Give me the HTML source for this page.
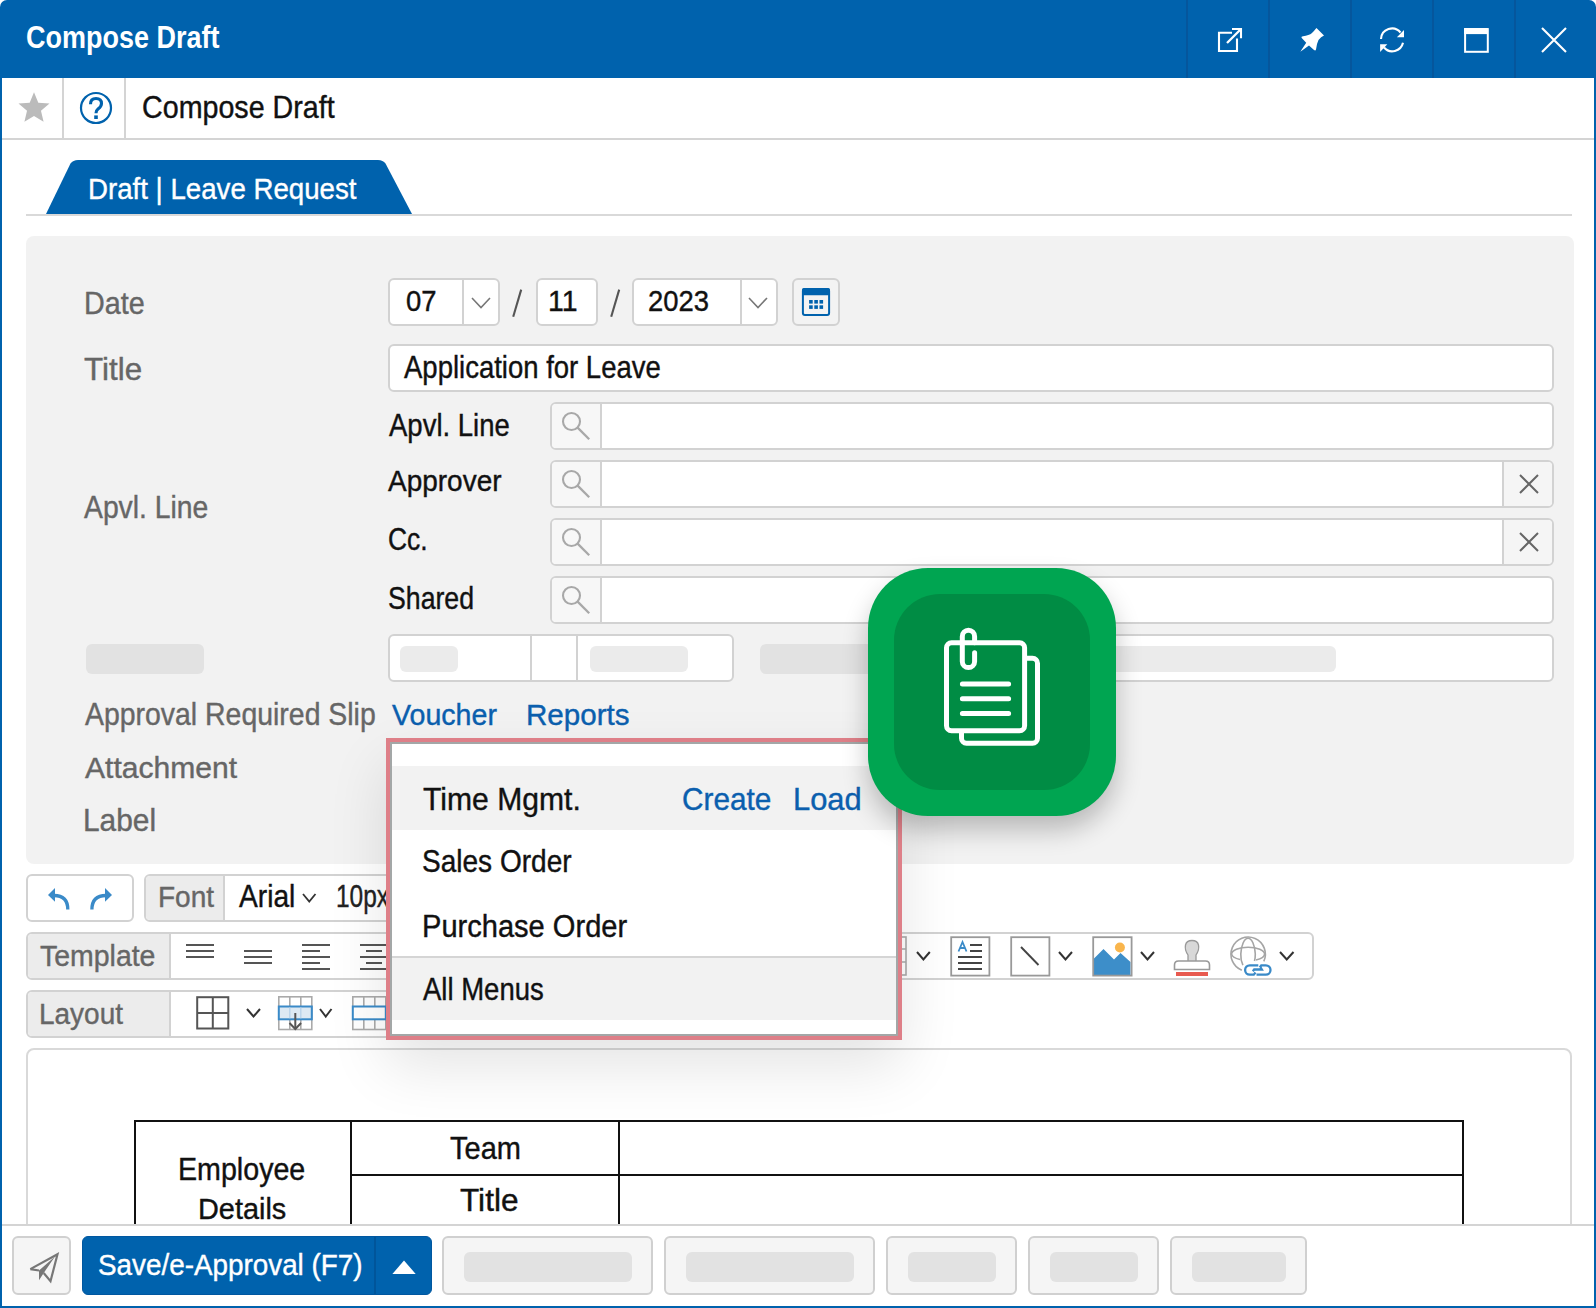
<!DOCTYPE html><html><head><meta charset="utf-8"><style>
html,body{margin:0;padding:0;}
body{width:1596px;height:1308px;overflow:hidden;position:relative;background:#fff;font-family:"Liberation Sans",sans-serif;}
.a{position:absolute;box-sizing:content-box;}
.t{position:absolute;white-space:nowrap;line-height:1;transform-origin:0 0;-webkit-text-stroke:0.4px currentColor;}
svg.a{overflow:visible;}
</style></head><body>
<div class="a" style="left:0px;top:0px;width:1596px;height:1308px;background:#0062ad;border-radius:7px 7px 0 0;"></div>
<div class="a" style="left:2px;top:78px;width:1592px;height:1228px;background:#fff;"></div>
<div class="t" style="left:25.92px;top:22.16px;font-size:30.52px;color:#fff;font-weight:700;-webkit-text-stroke:0;transform:scaleX(0.8841);">Compose Draft</div>
<div class="a" style="left:1186px;top:0px;width:2px;height:78px;background:#05569c;"></div>
<div class="a" style="left:1268px;top:0px;width:2px;height:78px;background:#05569c;"></div>
<div class="a" style="left:1350px;top:0px;width:2px;height:78px;background:#05569c;"></div>
<div class="a" style="left:1432px;top:0px;width:2px;height:78px;background:#05569c;"></div>
<div class="a" style="left:1514px;top:0px;width:2px;height:78px;background:#05569c;"></div>
<svg class="a" style="left:1210px;top:20px;" width="40" height="40" viewBox="0 0 40 40"><path d="M22 12.8 H9 V31 H27 V18.5" fill="none" stroke="#fff" stroke-width="2.1"/><path d="M17 23 L30.5 9.5" stroke="#fff" stroke-width="2.3"/><path d="M22 9 H31 V18.3" fill="none" stroke="#fff" stroke-width="2.1"/></svg>
<svg class="a" style="left:1292px;top:20px;" width="40" height="40" viewBox="0 0 40 40"><path d="M24.5 8.1 L32 15.6 Q29 17 26.5 20 Q24.5 24 24 29.5 Q23.5 31 22 30 L17 25.4 L8.3 31.7 L14.2 22.8 L9.5 17.8 Q9 16.5 11 16.2 Q17 15.5 20 13 Q22.5 10.5 24 8.5 Z" fill="#fff"/></svg>
<svg class="a" style="left:1372px;top:20px;" width="40" height="40" viewBox="0 0 40 40"><path d="M9 19 A11 11 0 0 1 28.5 12.5" fill="none" stroke="#fff" stroke-width="2.1"/><path d="M32 9.9 V17.3 H24.9 Z" fill="#fff"/><path d="M31 22.8 A11 11 0 0 1 12 27.5" fill="none" stroke="#fff" stroke-width="2.1"/><path d="M8.1 24.2 H15.3 L8.1 32 Z" fill="#fff"/></svg>
<svg class="a" style="left:1460px;top:24px;" width="32" height="32" viewBox="0 0 32 32"><rect x="5.1" y="5.1" width="22.7" height="22.7" fill="none" stroke="#fff" stroke-width="2"/><rect x="4.1" y="4.1" width="23.7" height="6" fill="#fff"/></svg>
<svg class="a" style="left:1536px;top:22px;" width="36" height="36" viewBox="0 0 36 36"><path d="M6 6 L30 30 M30 6 L6 30" stroke="#fff" stroke-width="2.1"/></svg>
<div class="a" style="left:2px;top:138px;width:1592px;height:2px;background:#d4d4d4;"></div>
<div class="a" style="left:62px;top:78px;width:2px;height:60px;background:#d4d4d4;"></div>
<div class="a" style="left:124px;top:78px;width:2px;height:60px;background:#d4d4d4;"></div>
<svg class="a" style="left:14px;top:88px;" width="40" height="40" viewBox="0 0 40 40"><path d="M20.00 4.30 L24.31 14.67 L35.50 15.56 L26.98 22.87 L29.58 33.79 L20.00 27.94 L10.42 33.79 L13.02 22.87 L4.50 15.56 L15.69 14.67 Z" fill="#bbbbbb"/></svg>
<svg class="a" style="left:76px;top:88px;" width="40" height="40" viewBox="0 0 40 40"><circle cx="20" cy="20" r="15" fill="none" stroke="#0062ad" stroke-width="2.2"/><path d="M14.5 16.2 Q14.5 10.5 20 10.5 Q25.5 10.5 25.5 15.5 Q25.5 18.5 22 21 Q20 22.5 20 25.3" fill="none" stroke="#0062ad" stroke-width="3.1"/><rect x="18.2" y="27.4" width="3.6" height="3.6" fill="#0062ad"/></svg>
<div class="t" style="left:141.57px;top:92.16px;font-size:30.52px;color:#111;transform:scaleX(0.9389);">Compose Draft</div>
<svg class="a" style="left:40px;top:155px;" width="380" height="65" viewBox="0 0 380 65"><path d="M6 59 L30.5 8.5 Q33 5 38 5 H338 Q343 5 345.5 8.5 L372 59 Z" fill="#0062ad"/></svg>
<div class="a" style="left:26px;top:214px;width:1546px;height:2px;background:#d9d9d9;"></div>
<div class="t" style="left:87.79px;top:175.39px;font-size:29.07px;color:#fff;transform:scaleX(0.9512);">Draft | Leave Request</div>
<div class="a" style="left:26px;top:236px;width:1548px;height:628px;background:#f2f2f2;border-radius:8px;"></div>
<div class="t" style="left:83.70px;top:288.16px;font-size:30.52px;color:#666666;transform:scaleX(0.9408);">Date</div>
<div class="t" style="left:84.37px;top:354.16px;font-size:30.52px;color:#666666;transform:scaleX(1.0278);">Title</div>
<div class="t" style="left:84.00px;top:492.16px;font-size:30.52px;color:#666666;transform:scaleX(0.9274);">Apvl. Line</div>
<div class="t" style="left:84.50px;top:699.05px;font-size:31.25px;color:#666666;transform:scaleX(0.9096);">Approval Required Slip</div>
<div class="t" style="left:84.50px;top:752.65px;font-size:29.94px;color:#666666;transform:scaleX(1.0046);">Attachment</div>
<div class="t" style="left:82.61px;top:805.79px;font-size:30.96px;color:#666666;transform:scaleX(0.9648);">Label</div>
<div class="a" style="left:86px;top:644px;width:118px;height:30px;background:#e2e2e2;border-radius:6px;"></div>
<div class="a" style="left:388px;top:278px;width:108px;height:44px;border:2px solid #d2d2d2;border-radius:6px;background:#fff;"></div>
<div class="a" style="left:462px;top:280px;width:2px;height:44px;background:#d2d2d2;"></div>
<svg class="a" style="left:470.0px;top:295.95px;" width="22" height="13.5" viewBox="0 0 22 13.5"><path d="M2 2 L11.0 11.5 L20 2" fill="none" stroke="#777" stroke-width="1.6"/></svg>
<div class="t" style="left:405.90px;top:287.39px;font-size:29.07px;color:#111;transform:scaleX(0.9443);">07</div>
<svg class="a" style="left:500px;top:280px;" width="40" height="40" viewBox="0 0 40 40"><path d="M13.2 36.8 L21.2 9.6" stroke="#555" stroke-width="2.1"/></svg>
<div class="a" style="left:536px;top:278px;width:58px;height:44px;border:2px solid #d2d2d2;border-radius:6px;background:#fff;"></div>
<div class="t" style="left:547.87px;top:287.39px;font-size:29.07px;color:#111;transform:scaleX(0.9775);">11</div>
<svg class="a" style="left:598px;top:280px;" width="40" height="40" viewBox="0 0 40 40"><path d="M13.2 36.8 L21.2 9.6" stroke="#555" stroke-width="2.1"/></svg>
<div class="a" style="left:632px;top:278px;width:142px;height:44px;border:2px solid #d2d2d2;border-radius:6px;background:#fff;"></div>
<div class="a" style="left:740px;top:280px;width:2px;height:44px;background:#d2d2d2;"></div>
<svg class="a" style="left:747.0px;top:295.95px;" width="22" height="13.5" viewBox="0 0 22 13.5"><path d="M2 2 L11.0 11.5 L20 2" fill="none" stroke="#777" stroke-width="1.6"/></svg>
<div class="t" style="left:647.63px;top:287.39px;font-size:29.07px;color:#111;transform:scaleX(0.9426);">2023</div>
<div class="a" style="left:792px;top:278px;width:44px;height:44px;border:2px solid #d2d2d2;border-radius:6px;background:#f3f3f3;"></div>
<svg class="a" style="left:800px;top:286px;" width="32" height="32" viewBox="0 0 32 32"><rect x="2.9" y="2.9" width="26.2" height="26.2" rx="2" fill="none" stroke="#0062ad" stroke-width="2"/><rect x="2" y="2" width="28" height="7.2" rx="2" fill="#0062ad"/><g fill="#0062ad"><rect x="9.1" y="14" width="3.6" height="3.6"/><rect x="14.3" y="14" width="3.6" height="3.6"/><rect x="19.5" y="14" width="3.6" height="3.6"/><rect x="9.1" y="19.3" width="3.6" height="3.6"/><rect x="14.3" y="19.3" width="3.6" height="3.6"/><rect x="19.5" y="19.3" width="3.6" height="3.6"/></g></svg>
<div class="a" style="left:388px;top:344px;width:1162px;height:44px;border:2px solid #d2d2d2;border-radius:6px;background:#fff;"></div>
<div class="t" style="left:404.40px;top:352.16px;font-size:30.52px;color:#111;transform:scaleX(0.9009);">Application for Leave</div>
<div class="t" style="left:388.50px;top:410.05px;font-size:31.25px;color:#111;transform:scaleX(0.8801);">Apvl. Line</div>
<div class="a" style="left:550px;top:402px;width:1000px;height:44px;border:2px solid #d2d2d2;border-radius:6px;background:#fff;"></div>
<div class="a" style="left:552px;top:404px;width:48px;height:44px;background:#f7f7f7;border-radius:4px 0 0 4px;"></div>
<div class="a" style="left:600px;top:404px;width:2px;height:44px;background:#d2d2d2;"></div>
<svg class="a" style="left:558px;top:410px;" width="36" height="36" viewBox="0 0 36 36"><circle cx="13.5" cy="11.5" r="8.5" fill="none" stroke="#a8a8a8" stroke-width="2.1"/><path d="M19.6 17.6 L31.2 29.2" stroke="#a8a8a8" stroke-width="2.3"/></svg>
<div class="t" style="left:388.40px;top:466.41px;font-size:30.23px;color:#111;transform:scaleX(0.9260);">Approver</div>
<div class="a" style="left:550px;top:460px;width:1000px;height:44px;border:2px solid #d2d2d2;border-radius:6px;background:#fff;"></div>
<div class="a" style="left:552px;top:462px;width:48px;height:44px;background:#f7f7f7;border-radius:4px 0 0 4px;"></div>
<div class="a" style="left:600px;top:462px;width:2px;height:44px;background:#d2d2d2;"></div>
<svg class="a" style="left:558px;top:468px;" width="36" height="36" viewBox="0 0 36 36"><circle cx="13.5" cy="11.5" r="8.5" fill="none" stroke="#a8a8a8" stroke-width="2.1"/><path d="M19.6 17.6 L31.2 29.2" stroke="#a8a8a8" stroke-width="2.3"/></svg>
<div class="a" style="left:1504px;top:462px;width:48px;height:44px;background:#f5f5f5;border-radius:0 4px 4px 0;"></div>
<div class="a" style="left:1502px;top:462px;width:2px;height:44px;background:#d2d2d2;"></div>
<svg class="a" style="left:1515px;top:470px;" width="28" height="28" viewBox="0 0 28 28"><path d="M5 5 L23 23 M23 5 L5 23" stroke="#666" stroke-width="2"/></svg>
<div class="t" style="left:387.68px;top:524.16px;font-size:30.52px;color:#111;transform:scaleX(0.8656);">Cc.</div>
<div class="a" style="left:550px;top:518px;width:1000px;height:44px;border:2px solid #d2d2d2;border-radius:6px;background:#fff;"></div>
<div class="a" style="left:552px;top:520px;width:48px;height:44px;background:#f7f7f7;border-radius:4px 0 0 4px;"></div>
<div class="a" style="left:600px;top:520px;width:2px;height:44px;background:#d2d2d2;"></div>
<svg class="a" style="left:558px;top:526px;" width="36" height="36" viewBox="0 0 36 36"><circle cx="13.5" cy="11.5" r="8.5" fill="none" stroke="#a8a8a8" stroke-width="2.1"/><path d="M19.6 17.6 L31.2 29.2" stroke="#a8a8a8" stroke-width="2.3"/></svg>
<div class="a" style="left:1504px;top:520px;width:48px;height:44px;background:#f5f5f5;border-radius:0 4px 4px 0;"></div>
<div class="a" style="left:1502px;top:520px;width:2px;height:44px;background:#d2d2d2;"></div>
<svg class="a" style="left:1515px;top:528px;" width="28" height="28" viewBox="0 0 28 28"><path d="M5 5 L23 23 M23 5 L5 23" stroke="#666" stroke-width="2"/></svg>
<div class="t" style="left:388.20px;top:583.25px;font-size:31.25px;color:#111;transform:scaleX(0.8537);">Shared</div>
<div class="a" style="left:550px;top:576px;width:1000px;height:44px;border:2px solid #d2d2d2;border-radius:6px;background:#fff;"></div>
<div class="a" style="left:552px;top:578px;width:48px;height:44px;background:#f7f7f7;border-radius:4px 0 0 4px;"></div>
<div class="a" style="left:600px;top:578px;width:2px;height:44px;background:#d2d2d2;"></div>
<svg class="a" style="left:558px;top:584px;" width="36" height="36" viewBox="0 0 36 36"><circle cx="13.5" cy="11.5" r="8.5" fill="none" stroke="#a8a8a8" stroke-width="2.1"/><path d="M19.6 17.6 L31.2 29.2" stroke="#a8a8a8" stroke-width="2.3"/></svg>
<div class="a" style="left:388px;top:634px;width:342px;height:44px;border:2px solid #d2d2d2;border-radius:6px;background:#fff;"></div>
<div class="a" style="left:530px;top:636px;width:2px;height:44px;background:#d2d2d2;"></div>
<div class="a" style="left:576px;top:636px;width:2px;height:44px;background:#d2d2d2;"></div>
<div class="a" style="left:400px;top:646px;width:58px;height:26px;background:#ebebeb;border-radius:6px;"></div>
<div class="a" style="left:590px;top:646px;width:98px;height:26px;background:#ebebeb;border-radius:6px;"></div>
<div class="a" style="left:760px;top:644px;width:140px;height:30px;background:#e2e2e2;border-radius:6px;"></div>
<div class="a" style="left:880px;top:634px;width:670px;height:44px;border:2px solid #d2d2d2;border-radius:6px;background:#fff;"></div>
<div class="a" style="left:1000px;top:646px;width:336px;height:26px;background:#ebebeb;border-radius:6px;"></div>
<div class="t" style="left:392.06px;top:700.21px;font-size:30.23px;color:#0b5fae;transform:scaleX(0.9465);">Voucher</div>
<div class="t" style="left:525.93px;top:700.21px;font-size:30.23px;color:#0b5fae;transform:scaleX(0.9791);">Reports</div>
<div class="a" style="left:26px;top:874px;width:104px;height:44px;border:2px solid #d2d2d2;border-radius:6px;background:#fff;"></div>
<svg class="a" style="left:40px;top:880px;" width="80" height="36" viewBox="0 0 80 36"><path d="M8 14.9 L15 8 L15 21.8 Z" fill="#3a8ac8"/><path d="M14 15.5 Q27.8 15.5 27.8 29.6" fill="none" stroke="#3a8ac8" stroke-width="3.3"/><path d="M72 14.9 L65 8 L65 21.8 Z" fill="#3a8ac8"/><path d="M66 15.5 Q51.9 15.5 51.9 29.6" fill="none" stroke="#3a8ac8" stroke-width="3.3"/></svg>
<div class="a" style="left:144px;top:874px;width:752px;height:44px;border:2px solid #d2d2d2;border-radius:6px;background:#fff;"></div>
<div class="a" style="left:146px;top:876px;width:77px;height:44px;background:#ececec;border-radius:4px 0 0 4px;"></div>
<div class="a" style="left:223px;top:876px;width:2px;height:44px;background:#d2d2d2;"></div>
<div class="t" style="left:158.16px;top:882.43px;font-size:30.09px;color:#666666;transform:scaleX(0.9320);">Font</div>
<div class="t" style="left:238.60px;top:881.82px;font-size:30.81px;color:#111;transform:scaleX(0.9140);">Arial</div>
<svg class="a" style="left:300.55px;top:891.65px;" width="16.5" height="11.7" viewBox="0 0 16.5 11.7"><path d="M2 2 L8.25 9.7 L14.5 2" fill="none" stroke="#333" stroke-width="1.8"/></svg>
<div class="t" style="left:335.67px;top:881.82px;font-size:30.81px;color:#222;transform:scaleX(0.7938);">10px</div>
<div class="a" style="left:26px;top:932px;width:1284px;height:44px;border:2px solid #d2d2d2;border-radius:6px;background:#fff;"></div>
<div class="a" style="left:28px;top:934px;width:141px;height:44px;background:#ececec;border-radius:4px 0 0 4px;"></div>
<div class="a" style="left:169px;top:934px;width:2px;height:44px;background:#d2d2d2;"></div>
<div class="t" style="left:40.43px;top:940.78px;font-size:29.80px;color:#666666;transform:scaleX(0.9547);">Template</div>
<div class="a" style="left:186px;top:944.0px;width:28px;height:2.0px;background:#555;"></div>
<div class="a" style="left:186px;top:950.0px;width:28px;height:2.0px;background:#555;"></div>
<div class="a" style="left:186px;top:956.0px;width:28px;height:2.0px;background:#555;"></div>
<div class="a" style="left:244px;top:950.0px;width:28px;height:2.0px;background:#555;"></div>
<div class="a" style="left:244px;top:956.0px;width:28px;height:2.0px;background:#555;"></div>
<div class="a" style="left:244px;top:962.0px;width:28px;height:2.0px;background:#555;"></div>
<div class="a" style="left:302px;top:944.0px;width:28px;height:2.0px;background:#555;"></div>
<div class="a" style="left:302px;top:950.0px;width:18px;height:2.0px;background:#555;"></div>
<div class="a" style="left:302px;top:956.0px;width:28px;height:2.0px;background:#555;"></div>
<div class="a" style="left:302px;top:962.0px;width:18px;height:2.0px;background:#555;"></div>
<div class="a" style="left:302px;top:968.0px;width:28px;height:2.0px;background:#555;"></div>
<div class="a" style="left:360px;top:944.0px;width:28px;height:2.0px;background:#555;"></div>
<div class="a" style="left:366px;top:950.0px;width:16px;height:2.0px;background:#555;"></div>
<div class="a" style="left:360px;top:956.0px;width:28px;height:2.0px;background:#555;"></div>
<div class="a" style="left:366px;top:962.0px;width:16px;height:2.0px;background:#555;"></div>
<div class="a" style="left:360px;top:968.0px;width:28px;height:2.0px;background:#555;"></div>
<div class="a" style="left:26px;top:990px;width:870px;height:44px;border:2px solid #d2d2d2;border-radius:6px;background:#fff;"></div>
<div class="a" style="left:28px;top:992px;width:141px;height:44px;background:#ececec;border-radius:4px 0 0 4px;"></div>
<div class="a" style="left:169px;top:992px;width:2px;height:44px;background:#d2d2d2;"></div>
<div class="t" style="left:39.16px;top:998.78px;font-size:29.80px;color:#666666;transform:scaleX(0.9383);">Layout</div>
<svg class="a" style="left:194px;top:994px;" width="38" height="38" viewBox="0 0 38 38"><rect x="3.2" y="3.2" width="31.1" height="31.3" fill="none" stroke="#555" stroke-width="2"/><path d="M18.8 3 V34.5 M3 18.9 H34.5" stroke="#555" stroke-width="2"/></svg>
<svg class="a" style="left:244.5px;top:1006.55px;" width="17" height="11.5" viewBox="0 0 17 11.5"><path d="M2 2 L8.5 9.5 L15 2" fill="none" stroke="#333" stroke-width="2"/></svg>
<svg class="a" style="left:276px;top:994px;" width="40" height="38" viewBox="0 0 40 38"><g fill="none" stroke="#aaa" stroke-width="1.6"><rect x="2.8" y="2.8" width="33" height="32.7"/><path d="M13.8 2.8 V35.5 M24.8 2.8 V35.5"/></g><rect x="2.8" y="12.5" width="33" height="12.8" fill="#dde9f3" stroke="#3a8ac8" stroke-width="2"/><path d="M13.8 13.5 V24.3 M24.8 13.5 V24.3" stroke="#b9d3ea" stroke-width="1.4"/><path d="M19.3 19 V35" stroke="#555" stroke-width="2"/><path d="M13.5 29 L19.3 35 L25.1 29" fill="none" stroke="#555" stroke-width="2"/></svg>
<svg class="a" style="left:318.25px;top:1006.55px;" width="15.5" height="11.5" viewBox="0 0 15.5 11.5"><path d="M2 2 L7.75 9.5 L13.5 2" fill="none" stroke="#333" stroke-width="2"/></svg>
<svg class="a" style="left:350px;top:994px;" width="40" height="38" viewBox="0 0 40 38"><g fill="none" stroke="#aaa" stroke-width="1.6"><rect x="2.8" y="2.8" width="33" height="32.7"/><path d="M13.8 2.8 V35.5 M24.8 2.8 V35.5"/></g><rect x="2.8" y="12.5" width="33" height="12.8" fill="#fff" stroke="#3a8ac8" stroke-width="2"/></svg>
<svg class="a" style="left:870px;top:934px;" width="40" height="44" viewBox="0 0 40 44"><g fill="none" stroke="#aaa" stroke-width="1.6"><rect x="2" y="3" width="34" height="38"/><path d="M2 15 H36 M2 28 H36"/></g></svg>
<svg class="a" style="left:914.6px;top:950.25px;" width="16.8" height="11.5" viewBox="0 0 16.8 11.5"><path d="M2 2 L8.4 9.5 L14.8 2" fill="none" stroke="#333" stroke-width="2"/></svg>
<svg class="a" style="left:948px;top:934px;" width="44" height="44" viewBox="0 0 44 44"><rect x="3.2" y="3.2" width="38.2" height="38.4" fill="none" stroke="#999" stroke-width="1.8"/><path d="M10.5 17.5 L14.5 8 L18.5 17.5 M12 14 H17" fill="none" stroke="#3a8ac8" stroke-width="1.8"/><g stroke="#444" stroke-width="1.9"><path d="M22 11 H34 M22 17 H34 M10 23 H34 M10 29 H34 M10 35 H34"/></g></svg>
<svg class="a" style="left:1008px;top:934px;" width="44" height="44" viewBox="0 0 44 44"><rect x="3.2" y="3.2" width="38.2" height="38.4" fill="none" stroke="#999" stroke-width="1.8"/><path d="M13 13 L30.5 31" stroke="#444" stroke-width="1.9"/></svg>
<svg class="a" style="left:1056.5px;top:950.25px;" width="17" height="11.5" viewBox="0 0 17 11.5"><path d="M2 2 L8.5 9.5 L15 2" fill="none" stroke="#333" stroke-width="2"/></svg>
<svg class="a" style="left:1090px;top:934px;" width="44" height="44" viewBox="0 0 44 44"><path d="M3 41 V25.5 L13.5 15 L24 25.5 L30.5 19 L40.5 28 V41 Z" fill="#3d8ec9"/><circle cx="29.9" cy="13.5" r="5" fill="#f9b54c"/><rect x="3.2" y="3.2" width="38.4" height="38.4" fill="none" stroke="#999" stroke-width="1.8"/></svg>
<svg class="a" style="left:1138.5px;top:950.25px;" width="17" height="11.5" viewBox="0 0 17 11.5"><path d="M2 2 L8.5 9.5 L15 2" fill="none" stroke="#333" stroke-width="2"/></svg>
<svg class="a" style="left:1170px;top:934px;" width="44" height="44" viewBox="0 0 44 44"><path d="M18 27 L18 21 Q14.5 16 15.5 11 Q16.5 6.5 22 6.5 Q27.5 6.5 28.5 11 Q29.5 16 26 21 L26 27" fill="#d8d8d8" stroke="#999" stroke-width="1.3"/><path d="M4.5 35.5 V31 Q4.5 27 8.5 27 H35.5 Q39.5 27 39.5 31 V35.5 Z" fill="#fff" stroke="#999" stroke-width="1.6"/><rect x="6" y="38" width="32" height="4" fill="#e85a4f"/></svg>
<svg class="a" style="left:1226px;top:932px;" width="50" height="48" viewBox="0 0 50 48"><g fill="none" stroke="#a5a5a5" stroke-width="1.6"><path d="M15.8 38.2 A17.2 17.2 0 1 1 37.8 29.4"/><path d="M5.6 22 A16.5 6.8 0 0 1 38.6 22 A16.5 6.8 0 0 1 30 28 M14 27.5 A16.5 6.8 0 0 1 5.6 22"/><path d="M16.9 33.2 Q14.5 28 14.8 22 A7.3 17.8 0 0 1 29.3 22 Q29.3 26 28.5 29"/></g><g fill="none" stroke="#3a8ac8" stroke-width="2.3"><path d="M32.3 33.3 H23.8 A4.4 4.4 0 0 0 23.8 42.7 H27.8 L29.5 40.5"/><path d="M30.5 42.7 H39.8 A4.4 4.4 0 0 0 39.8 33.3 H35.3 L33.8 35.5"/><path d="M34.5 35.5 L35.8 37.5 H28.2 L26.8 39.2"/></g></svg>
<svg class="a" style="left:1278.25px;top:950.25px;" width="17.5" height="11.5" viewBox="0 0 17.5 11.5"><path d="M2 2 L8.75 9.5 L15.5 2" fill="none" stroke="#333" stroke-width="2"/></svg>
<div class="a" style="left:26px;top:1048px;width:1542px;height:200px;border:2px solid #d9d9d9;border-radius:8px;background:#fff;"></div>
<div class="a" style="left:134px;top:1120px;width:1330px;height:2px;background:#111;"></div>
<div class="a" style="left:134px;top:1120px;width:2px;height:120px;background:#111;"></div>
<div class="a" style="left:1462px;top:1120px;width:2px;height:120px;background:#111;"></div>
<div class="a" style="left:350px;top:1120px;width:2px;height:120px;background:#111;"></div>
<div class="a" style="left:618px;top:1120px;width:2px;height:120px;background:#111;"></div>
<div class="a" style="left:350px;top:1174px;width:1114px;height:2px;background:#111;"></div>
<div class="t" style="left:178.01px;top:1153.84px;font-size:30.67px;color:#111;transform:scaleX(0.9337);">Employee</div>
<div class="t" style="left:197.59px;top:1194.48px;font-size:29.80px;color:#111;transform:scaleX(0.9692);">Details</div>
<div class="t" style="left:450.12px;top:1134.09px;font-size:30.96px;color:#111;transform:scaleX(0.9375);">Team</div>
<div class="t" style="left:459.87px;top:1185.72px;font-size:30.81px;color:#111;transform:scaleX(1.0254);">Title</div>
<div class="a" style="left:2px;top:1224px;width:1592px;height:82px;background:#fff;"></div>
<div class="a" style="left:2px;top:1224px;width:1592px;height:2px;background:#d4d4d4;"></div>
<div class="a" style="left:12px;top:1236px;width:55px;height:55px;border:2px solid #d0d0d0;border-radius:6px;background:#f5f5f5;"></div>
<svg class="a" style="left:26px;top:1249.5px;" width="36" height="36" viewBox="0 0 36 36"><path d="M4.3 19.1 L31.5 4.3 L24.5 31.2 L17.7 23 M4.3 19.1 L13 20.5" fill="none" stroke="#777" stroke-width="2.2" stroke-linejoin="miter"/><path d="M13 20.5 L29 6.5 L17.7 23 L13 30.2 Z" fill="#777"/></svg>
<div class="a" style="left:82px;top:1236px;width:348px;height:57px;border:1px solid #0057a0;border-radius:6px;background:#0062ad;"></div>
<div class="a" style="left:374px;top:1237px;width:2px;height:57px;background:#00559a;"></div>
<div class="t" style="left:97.95px;top:1250.03px;font-size:30.09px;color:#fff;transform:scaleX(0.9255);">Save/e-Approval (F7)</div>
<svg class="a" style="left:388px;top:1256px;" width="32" height="22" viewBox="0 0 32 22"><path d="M4.4 18 L16 4.5 L27.7 18 Z" fill="#fff"/></svg>
<div class="a" style="left:442px;top:1236px;width:207px;height:55px;border:2px solid #d0d0d0;border-radius:6px;background:#f5f5f5;"></div>
<div class="a" style="left:464px;top:1252px;width:168px;height:30px;background:#e2e2e2;border-radius:6px;"></div>
<div class="a" style="left:664px;top:1236px;width:207px;height:55px;border:2px solid #d0d0d0;border-radius:6px;background:#f5f5f5;"></div>
<div class="a" style="left:686px;top:1252px;width:168px;height:30px;background:#e2e2e2;border-radius:6px;"></div>
<div class="a" style="left:886px;top:1236px;width:127px;height:55px;border:2px solid #d0d0d0;border-radius:6px;background:#f5f5f5;"></div>
<div class="a" style="left:908px;top:1252px;width:88px;height:30px;background:#e2e2e2;border-radius:6px;"></div>
<div class="a" style="left:1028px;top:1236px;width:127px;height:55px;border:2px solid #d0d0d0;border-radius:6px;background:#f5f5f5;"></div>
<div class="a" style="left:1050px;top:1252px;width:88px;height:30px;background:#e2e2e2;border-radius:6px;"></div>
<div class="a" style="left:1170px;top:1236px;width:133px;height:55px;border:2px solid #d0d0d0;border-radius:6px;background:#f5f5f5;"></div>
<div class="a" style="left:1192px;top:1252px;width:94px;height:30px;background:#e2e2e2;border-radius:6px;"></div>
<div class="a" style="left:386px;top:738px;width:516px;height:302px;box-shadow:0 26px 56px rgba(0,0,0,0.11);"></div>
<div class="a" style="left:386px;top:738px;width:516px;height:302px;background:#de7f88;"></div>
<div class="a" style="left:390px;top:742px;width:508px;height:294px;background:#a3a7a7;"></div>
<div class="a" style="left:392px;top:744px;width:504px;height:290px;background:#fff;"></div>
<div class="a" style="left:392px;top:766px;width:504px;height:64px;background:#f2f2f2;"></div>
<div class="a" style="left:392px;top:956px;width:504px;height:2px;background:#d5d5d5;"></div>
<div class="a" style="left:392px;top:958px;width:504px;height:62px;background:#f2f2f2;"></div>
<div class="t" style="left:422.70px;top:782.61px;font-size:32.12px;color:#111;transform:scaleX(0.9376);">Time Mgmt.</div>
<div class="t" style="left:681.81px;top:782.61px;font-size:32.12px;color:#0b5fae;transform:scaleX(0.9270);">Create</div>
<div class="t" style="left:793.23px;top:782.61px;font-size:32.12px;color:#0b5fae;transform:scaleX(0.9624);">Load</div>
<div class="t" style="left:422.24px;top:847.49px;font-size:30.96px;color:#111;transform:scaleX(0.9056);">Sales Order</div>
<div class="t" style="left:421.67px;top:911.72px;font-size:30.81px;color:#111;transform:scaleX(0.9437);">Purchase Order</div>
<div class="t" style="left:423.30px;top:972.51px;font-size:32.12px;color:#111;transform:scaleX(0.8564);">All Menus</div>
<div class="a" style="left:868px;top:568px;width:248px;height:248px;border-radius:60px;background:#00a551;box-shadow:0 14px 26px rgba(0,0,0,0.24);"></div>
<div class="a" style="left:894px;top:594px;width:196px;height:196px;background:#008c44;border-radius:46px;"></div>
<svg class="a" style="left:930px;top:615px;" width="120" height="140" viewBox="0 0 120 140"><g fill="none" stroke="#fff" stroke-width="5" stroke-linecap="round"><rect x="31.5" y="43.3" width="76" height="85" rx="5"/><rect x="16.5" y="27.8" width="78.1" height="87.9" rx="5" fill="#008c44"/><path d="M32.3 27.8 V21.45 A6.15 6.15 0 0 1 44.6 21.45 V27.8"/><path d="M32.3 27.8 V46.45 A6.15 6.15 0 0 0 44.6 46.45 V37.8"/><path d="M32.4 69 H78.6 M32.4 83.8 H78.6 M32.4 98.5 H78.6"/></g></svg>
</body></html>
